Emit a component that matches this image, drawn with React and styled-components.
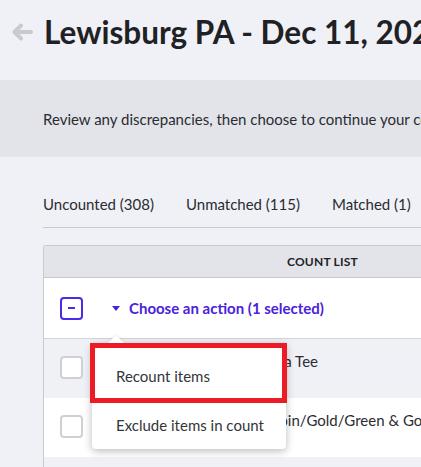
import React from "react";
import styled, { createGlobalStyle } from "styled-components";

const GlobalStyle = createGlobalStyle`
  html, body {
    margin: 0;
    padding: 0;
    overflow: hidden;
    background: #f0f1f6;
    font-family: Lato, "Open Sans", sans-serif;
  }
`

const Page = styled.div`
  width: 900px;
  min-height: 467px;
  background: #f0f1f6;
`

const Header = styled.div`
  display: flex;
  align-items: center;
  gap: 11px;
  height: 80px;
  padding: 0 0 17px 11px;
  box-sizing: border-box;
`

const BackButton = styled.button`
  display: flex;
  border: none;
  background: none;
  padding: 0;
  cursor: pointer;
`

const Title = styled.h1`
  margin: 0;
  font-size: 31.5px;
  font-weight: 700;
  color: #1f2125;
  white-space: nowrap;
`

const Banner = styled.div`
  height: 77px;
  display: flex;
  align-items: center;
  padding-left: 43px;
  background: #e3e4e9;
  font-size: 15px;
  color: #2a2c31;
  white-space: nowrap;
`

const Content = styled.div`
  padding: 32px 0 0 43px;
`

const Tabs = styled.div`
  display: flex;
  gap: 32px;
  height: 38px;
  border-bottom: 1px solid #c8c9ce;
  margin-bottom: 17px;
`

const Tab = styled.div`
  padding-top: 6px;
  font-size: 15px;
  color: #2a2c31;
`

const Table = styled.div`
  border: 1px solid #c8c9ce;
  border-bottom: none;
  border-radius: 3px 0 0 0;
  background: #fff;
`

const HeadRow = styled.div`
  display: flex;
  align-items: center;
  height: 31px;
  padding-left: 243px;
  background: #e3e4e9;
  border-bottom: 1px solid #c8c9ce;
  font-size: 12px;
  font-weight: 700;
  color: #1f2125;
  letter-spacing: 0.2px;
`

const ActionRow = styled.div`
  position: relative;
  display: flex;
  align-items: center;
  height: 60px;
  padding-left: 16px;
  border-bottom: 1px solid #d4d5da;
`

const Checkbox = styled.div`
  position: relative;
  width: 23px;
  height: 23px;
  box-sizing: border-box;
  border: 2px solid ${p => (p.$active ? "#4a2be8" : "#cfd0d5")};
  border-radius: 4px;
  background: #fff;
  flex-shrink: 0;

  &::after {
    content: "";
    display: ${p => (p.$active ? "block" : "none")};
    position: absolute;
    left: 6px;
    top: 8px;
    width: 7px;
    height: 2px;
    background: #4a2be8;
  }
`

const ActionToggle = styled.div`
  display: flex;
  align-items: center;
  gap: 9px;
  margin-left: 29px;
  font-size: 15px;
  font-weight: 700;
  color: #4a22dc;
`

const Caret = styled.span`
  width: 0;
  height: 0;
  border-left: 4px solid transparent;
  border-right: 4px solid transparent;
  border-top: 5px solid #4a22dc;
`

const Row = styled.div`
  display: flex;
  align-items: flex-start;
  height: 59px;
  padding: 17px 0 0 16px;
  box-sizing: border-box;
  background: ${p => (p.$striped ? "#f0f1f6" : "#fff")};
`

const RowText = styled.div`
  margin: -4px 0 0 40px;
  font-size: 15px;
  color: #2a2c31;
  white-space: nowrap;
`

const Menu = styled.div`
  position: absolute;
  left: 48px;
  top: 65px;
  width: 194px;
  padding-top: 8px;
  background: #fff;
  border-radius: 4px;
  box-shadow: 0 2px 8px rgba(0, 0, 0, 0.28);
  z-index: 2;

  &::before {
    content: "";
    position: absolute;
    left: 16px;
    top: -8px;
    border-left: 8px solid transparent;
    border-right: 8px solid transparent;
    border-bottom: 8px solid #fff;
    filter: drop-shadow(0 -1px 1px rgba(0, 0, 0, 0.08));
  }
`

const MenuItem = styled.div`
  display: flex;
  align-items: center;
  height: 49px;
  padding-left: 24px;
  font-size: 15px;
  color: #33353a;
`

const Highlight = styled.div`
  position: absolute;
  left: -2px;
  top: 0;
  width: 197px;
  height: 60px;
  box-sizing: border-box;
  border: 5px solid #ed1c24;
  pointer-events: none;
`

const BackArrow = () => (
  <svg width="22" height="18" viewBox="0 0 22 18">
    <path d="M20 9H4M10 2.5L3.5 9l6.5 6.5" fill="none" stroke="#c9cad0" strokeWidth="4" strokeLinecap="round" strokeLinejoin="round"/>
  </svg>
)

const items = [
  "Bucknell University Arena Tee",
  "Bucknell Bison Cap Maroin/Gold/Green & Gold",
  "Lewisburg Crew Sweatshirt",
]

export default function App() {
  return (
    <Page>
      <GlobalStyle/>
      <Header>
        <BackButton><BackArrow/></BackButton>
        <Title>Lewisburg PA - Dec 11, 2021</Title>
      </Header>
      <Banner>Review any discrepancies, then choose to continue your count or complete it.</Banner>
      <Content>
        <Tabs>
          <Tab>Uncounted (308)</Tab>
          <Tab>Unmatched (115)</Tab>
          <Tab>Matched (1)</Tab>
        </Tabs>
        <Table>
          <HeadRow>COUNT LIST</HeadRow>
          <ActionRow>
            <Checkbox $active/>
            <ActionToggle><Caret/>Choose an action (1 selected)</ActionToggle>
            <Menu>
              <Highlight/>
              <MenuItem>Recount items</MenuItem>
              <MenuItem>Exclude items in count</MenuItem>
            </Menu>
          </ActionRow>
          {items.map((name, i) => (
            <Row key={name} $striped={i % 2 === 0}>
              <Checkbox/>
              <RowText>{name}</RowText>
            </Row>
          ))}
        </Table>
      </Content>
    </Page>
  );
}
